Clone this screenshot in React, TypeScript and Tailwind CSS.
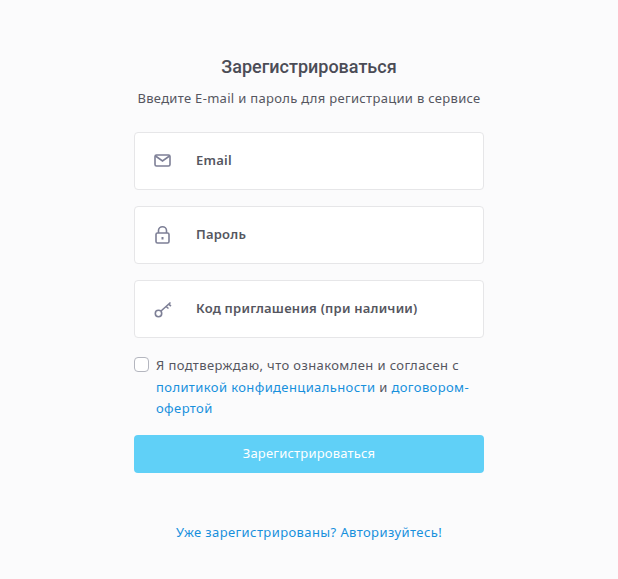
export default function App() {
  const Field = ({ icon, label }: { icon: React.ReactNode; label: string }) => (
    <div className="flex h-[58px] items-center rounded-[4px] border border-[#e6e6e8] bg-white">
      <div className="ml-[18px] flex w-[43px] shrink-0 items-center">{icon}</div>
      <span className="text-[13px] font-semibold tracking-[0.22px] text-[#555660]">{label}</span>
    </div>
  );
  return (
    <div className="flex min-h-[579px] justify-center bg-[#fbfbfc] font-['Noto_Sans',sans-serif]">
      <div className="flex w-[350px] flex-col pt-[55px]">
        <h1 className="text-center font-['Roboto',sans-serif] text-[18px] leading-[24px] font-medium text-[#4b4c56]">Зарегистрироваться</h1>
        <p className="mt-[10px] -mx-4 whitespace-nowrap text-center text-[13px] leading-[18px] tracking-[0.31px] text-[#555660]">Введите E-mail и пароль для регистрации в сервисе</p>
        <div className="mt-[25px] flex flex-col gap-4">
          <Field
            label="Email"
            icon={
              <svg width="17" height="13" viewBox="0 0 17 13" fill="none" stroke="#7d7f96" strokeWidth="1.6" className="ml-[1px] -mt-[1px]">
                <rect x="1" y="1" width="15" height="11" rx="1.5" />
                <path d="M1.5 2 L8.5 7 L15.5 2" />
              </svg>
            }
          />
          <Field
            label="Пароль"
            icon={
              <svg width="15" height="18" viewBox="0 0 15 18" fill="none" stroke="#7d7f96" strokeWidth="1.6" className="ml-[2px] -mt-[1px]">
                <rect x="1" y="7" width="13" height="10" rx="1.5" />
                <path d="M3.5 7 V4.5 a4 3.7 0 0 1 8 0 V7" />
                <path d="M7.5 11 V13.5" strokeWidth="2" />
              </svg>
            }
          />
          <Field
            label="Код приглашения (при наличии)"
            icon={
              <svg width="18" height="18" viewBox="0 0 18 18" fill="none" stroke="#7d7f96" strokeWidth="1.6" className="ml-[1px]">
                <circle cx="4.5" cy="13.5" r="3.2" />
                <path d="M7 11 L16.5 2.5 M12 6.5 L14.5 8.5 M14.5 4.2 L17 6" />
              </svg>
            }
          />
        </div>
        <div className="mt-[17px] flex">
          <span className="mt-[2px] h-[15px] w-[15px] shrink-0 rounded-[4px] border border-[#b4b6bf] bg-white" />
          <p className="ml-[7px] text-[13px] leading-[21.5px] tracking-[0.39px] text-[#555660]">
            Я подтверждаю, что ознакомлен и согласен с <a className="text-[#1790dc]">политикой конфиденциальности</a> и <a className="text-[#1790dc]">договором-офертой</a>
          </p>
        </div>
        <button className="mt-[15px] h-[38px] rounded-[4px] bg-[#60d0f7] text-[13px] tracking-[0.2px] text-white">Зарегистрироваться</button>
        <a className="mt-[49px] text-center text-[13px] leading-[20px] tracking-[0.4px] text-[#1790dc]">Уже зарегистрированы? Авторизуйтесь!</a>
      </div>
    </div>
  );
}
